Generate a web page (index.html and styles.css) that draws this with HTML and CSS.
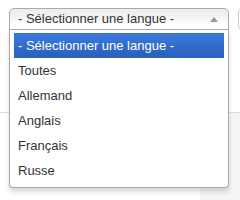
FILE: index.html
```html
<!DOCTYPE html>
<html lang="fr">
<head>
<meta charset="utf-8">
<link rel="stylesheet" href="styles.css">
</head>
<body>
<div class="page">
  <div class="top">
    <div class="chosen">
      <div class="single">
        <span class="label">- Sélectionner une langue -</span>
        <span class="arrow"></span>
      </div>
      <div class="drop">
        <ul class="results">
          <li class="highlighted">- Sélectionner une langue -</li>
          <li>Toutes</li>
          <li>Allemand</li>
          <li>Anglais</li>
          <li>Français</li>
          <li>Russe</li>
        </ul>
      </div>
    </div>
    <div class="other"></div>
  </div>
  <div class="bottom">
    <div class="left"></div>
    <div class="right"></div>
  </div>
</div>
</body>
</html>
```
FILE: styles.css
```css
html, body {
  margin: 0;
  padding: 0;
  background: #fff;
  font-family: "Liberation Sans", Arial, sans-serif;
  font-size: 13px;
  color: #333;
}
.page {
  width: 240px;
  height: 200px;
  overflow: hidden;
  display: flex;
  flex-direction: column;
}
.top {
  height: 112px;
  display: flex;
  padding: 8px 0 0 9px;
  box-sizing: border-box;
  gap: 9px;
  position: relative;
  z-index: 2;
}
.chosen {
  position: relative;
  width: 220px;
  flex: none;
}
.single {
  height: 22px;
  box-sizing: border-box;
  border: 1px solid #aaa;
  border-radius: 5px 5px 0 0;
  background: linear-gradient(#eee 20%, #fff 80%);
  display: flex;
  align-items: center;
  padding-left: 8px;
  position: relative;
}
.label {
  flex: 1;
  line-height: 16px;
}
.arrow {
  width: 0;
  height: 0;
  border-left: 4px solid transparent;
  border-right: 4px solid transparent;
  border-bottom: 5px solid #999;
  margin-right: 10px;
}
.drop {
  position: absolute;
  top: 22px;
  left: 0;
  width: 220px;
  box-sizing: border-box;
  background: #fff;
  border: 1px solid #aaa;
  border-top: 0;
  border-radius: 0 0 4px 4px;
  box-shadow: 0 4px 5px rgba(0, 0, 0, .15);
}
.results {
  list-style: none;
  margin: 0 4px 4px 0;
  padding: 3px 0 0 4px;
}
.results li {
  padding: 5px 4px;
  line-height: 15px;
  color: #333;
}
.results li.highlighted {
  color: #fff;
  background: linear-gradient(#3875d7 20%, #2a62bc 90%);
}
.other {
  width: 30px;
  height: 22px;
  box-sizing: border-box;
  border: 1px solid #ccc;
  border-radius: 4px;
  flex: none;
}
.bottom {
  flex: 1;
  display: flex;
  border-top: 1px solid #ddd;
}
.left {
  flex: 1;
  background: #fff;
}
.right {
  width: 40px;
  background: #f5f5f5;
}
```
